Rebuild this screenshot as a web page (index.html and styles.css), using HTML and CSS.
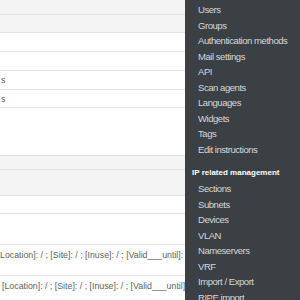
FILE: index.html
```html
<!DOCTYPE html>
<html lang="en">
  <head>
    <meta charset="utf-8"/>
    <title>Administration</title>
    <link rel="stylesheet" href="styles.css">
  </head>
  <body>
    <div class="page">
      <div class="content">
        <div class="row gray r14"></div>
        <div class="row gray r17"></div>
        <div class="row r18"></div>
        <div class="row r18"></div>
        <div class="row r18"><span class="cut">s</span></div>
        <div class="row r17"><span class="cut">s</span></div>
        <div class="gap r47"></div>
        <div class="row gray r13 topline"></div>
        <div class="row gray r25"></div>
        <div class="row r17"></div>
        <div class="row r30"></div>
        <div class="row r30 attr">
          <span class="shift1">Location]: / ; [Site]: / ; [Inuse]: / ; [Valid___until]: /</span>
        </div>
        <div class="row r30 attr">
          <span class="shift2">[Location]: / ; [Site]: / ; [Inuse]: / ; [Valid___until]:</span>
        </div>
      </div>
      <ul class="menu">
        <li>Users</li>
        <li>Groups</li>
        <li>Authentication methods</li>
        <li>Mail settings</li>
        <li>API</li>
        <li>Scan agents</li>
        <li>Languages</li>
        <li>Widgets</li>
        <li>Tags</li>
        <li>Edit instructions</li>
        <li class="header">IP related management</li>
        <li>Sections</li>
        <li>Subnets</li>
        <li>Devices</li>
        <li>VLAN</li>
        <li>Nameservers</li>
        <li>VRF</li>
        <li>Import / Export</li>
        <li>RIPE import</li>
      </ul>
    </div>
  </body>
</html>
```

FILE: styles.css
```css
html, body {
  margin: 0;
  padding: 0;
  height: 300px;
  overflow: hidden;
  background: #ffffff;
  font-family: "Liberation Sans", Arial, sans-serif;
}
.page {
  display: flex;
  height: 300px;
  overflow: hidden;
}
.content {
  flex: 1;
  min-width: 0;
  overflow: hidden;
}
.row {
  border-bottom: solid 1px #e3e3e3;
  box-sizing: border-box;
  font-size: 8.8px;
  color: #606060;
  white-space: nowrap;
  overflow: hidden;
}
.gray {
  background-color: #f4f4f4;
}
.topline {
  border-top: solid 1px #e3e3e3;
}
.r13 { height: 15px; }
.r14 { height: 15px; }
.r17 { height: 18px; }
.r18 { height: 19px; }
.r25 { height: 26px; }
.r30 { height: 31px; }
.r47 { height: 47px; }
.cut {
  display: inline-block;
  padding-left: 1px;
  line-height: 18px;
}
.attr {
  padding-top: 4px;
  line-height: 13px;
}
.shift1 {
  margin-left: 0;
}
.shift2 {
  margin-left: 2px;
}
.menu {
  flex: none;
  width: 115px;
  margin: 0;
  padding: 2px 0 0;
  list-style: none;
  background-color: #3b4045;
  font-size: 9.5px;
  letter-spacing: -0.45px;
  line-height: 15.55px;
  color: #d6d8da;
  white-space: nowrap;
  overflow: hidden;
}
.menu li {
  padding-left: 13px;
}
.menu .header {
  margin-top: 8px;
  padding-left: 7px;
  font-size: 8px;
  letter-spacing: 0;
  font-weight: bold;
  color: #ffffff;
}
```
